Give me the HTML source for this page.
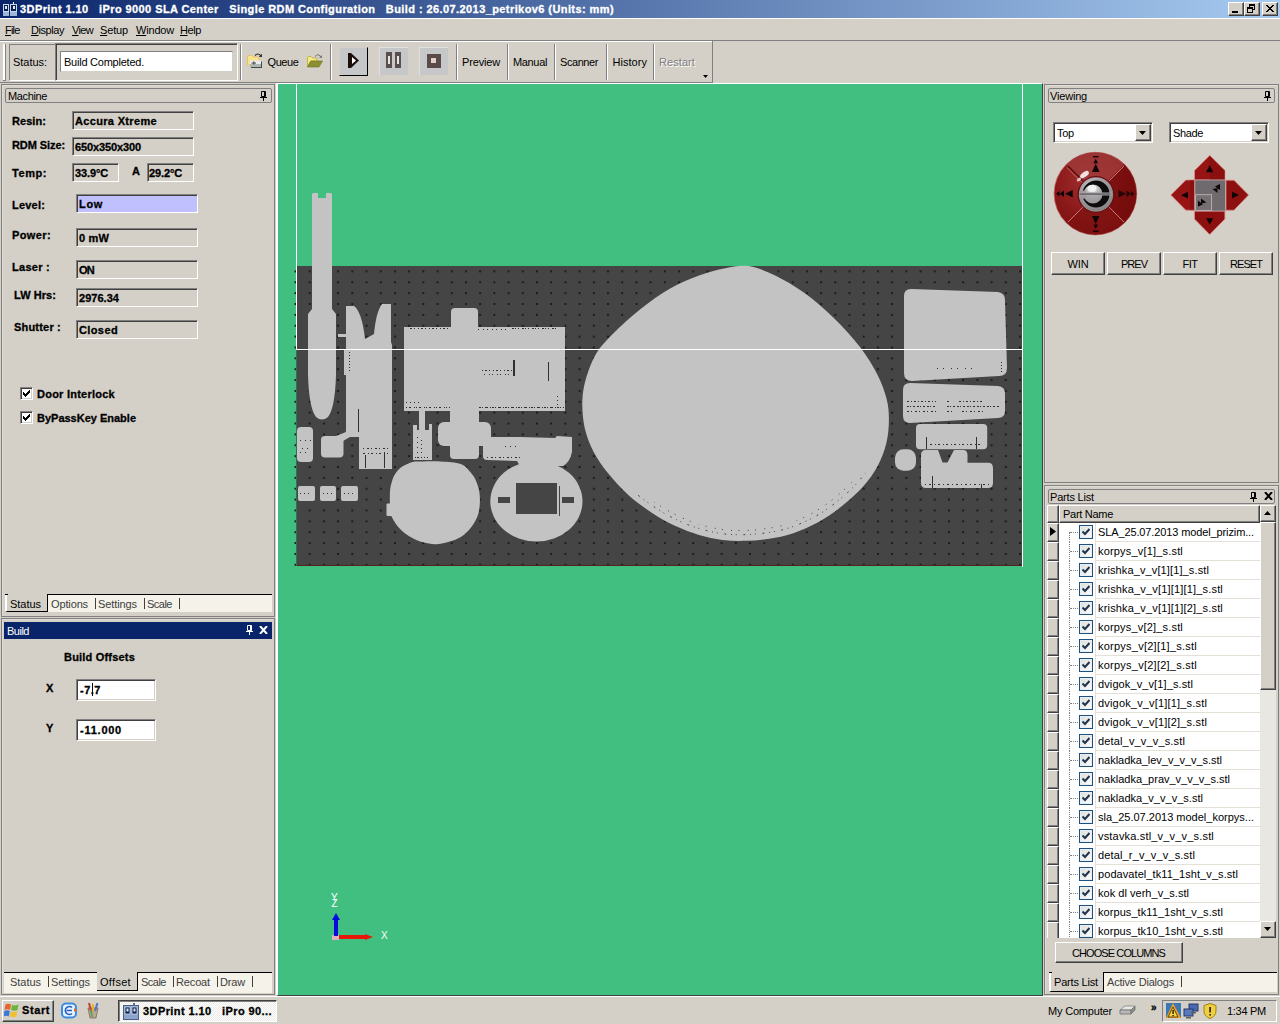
<!DOCTYPE html>
<html><head><meta charset="utf-8"><title>3DPrint 1.10</title>
<style>
html,body{margin:0;padding:0;}
body{width:1280px;height:1024px;overflow:hidden;background:#d4d0c8;position:relative;font-family:"Liberation Sans",sans-serif;font-size:11px;color:#000;}
div,span{box-sizing:border-box;}
.a{position:absolute;}
.t{position:absolute;white-space:nowrap;line-height:13px;height:13px;}
.b{font-weight:bold;-webkit-text-stroke:0.3px currentColor;}
.w{color:#fff;}
u{text-decoration:underline;}
/* title */
#title{left:0;top:0;width:1280px;height:18px;border-bottom:0;background:linear-gradient(to right,#0a246a 0%,#a6caf0 100%);}
.cap{position:absolute;top:2px;width:16px;height:14px;background:#d4d0c8;border:1px solid;border-color:#fff #404040 #404040 #fff;box-shadow:inset -1px -1px 0 #808080;}
/* sunken / raised */
.sunk{border:1px solid;border-color:#808080 #fff #fff #808080;}
.sunk2{border:1px solid;border-color:#808080 #fff #fff #808080;box-shadow:inset 1px 1px 0 #404040, inset -1px -1px 0 #d4d0c8;}
.rais{border:1px solid;border-color:#fff #404040 #404040 #fff;box-shadow:inset -1px -1px 0 #808080;}
.fld{position:absolute;height:19px;background:#d4d0c8;border:1px solid;border-color:#808080 #fff #fff #808080;box-shadow:inset 1px 1px 0 #404040;}
.sepv{position:absolute;width:2px;border-left:1px solid #808080;border-right:1px solid #fff;}
.seph{position:absolute;height:2px;border-top:1px solid #808080;border-bottom:1px solid #fff;}
.grip{position:absolute;height:17px;border:1px solid #808080;border-radius:2px;background:#d4d0c8;}
.tabbar{position:absolute;height:20px;background:#f5f2ea;border-top:1px solid #000;}
.btn{position:absolute;background:#d4d0c8;border:1px solid;border-color:#fff #404040 #404040 #fff;box-shadow:inset -1px -1px 0 #808080;text-align:center;}
.ck{width:13px;height:13px;background:#fff;border:1px solid;border-color:#808080 #fff #fff #808080;box-shadow:inset 1px 1px 0 #404040, inset -1px -1px 0 #d4d0c8;}
.inp{background:#fff;border:1px solid;border-color:#808080 #fff #fff #808080;box-shadow:inset 1px 1px 0 #404040, inset -1px -1px 0 #d4d0c8;}
.hd{background:#d4d0c8;border:1px solid;border-color:#fff #404040 #404040 #fff;box-shadow:inset -1px -1px 0 #808080;}
.cb{width:14px;height:14px;border:1px solid #1c5180;background:linear-gradient(135deg,#dcdcd7 0%,#fff 100%);box-shadow:inset 0 0 0 1px #e8eef4;}

</style></head>
<body>
<!-- title bar -->
<div id="title" class="a"></div><div class="a" style="left:0;top:18px;width:1280px;height:1px;background:#fff;"></div>
<svg class="a" style="left:2px;top:1px;" width="16" height="16" viewBox="0 0 16 16">
  <rect x="1" y="3" width="6" height="12" fill="#9fb6d8"/><rect x="8" y="3" width="7" height="12" fill="#9fb6d8"/>
  <rect x="1.5" y="3.5" width="5" height="7" fill="#10204a" stroke="#c8d8f0"/><rect x="8.5" y="3.5" width="6" height="7" fill="#10204a" stroke="#c8d8f0"/>
  <rect x="3" y="5" width="2" height="3" fill="#dfe8f8"/><rect x="11" y="5" width="2" height="3" fill="#dfe8f8"/>
  <rect x="11" y="1" width="1" height="2" fill="#fff"/>
</svg>
<span class="t b w" style="letter-spacing:0.416px;left:20px;top:3px;">3DPrint 1.10&nbsp;&nbsp; iPro 9000 SLA Center&nbsp;&nbsp; Single RDM Configuration&nbsp;&nbsp; Build : 26.07.2013_petrikov6 (Units: mm)</span>
<div class="cap" style="left:1228px;"><div class="a" style="left:3px;top:8px;width:6px;height:2px;background:#000;"></div></div>
<div class="cap" style="left:1244px;"><div class="a" style="left:4px;top:1px;width:6px;height:6px;border:1px solid #000;border-top-width:2px;"></div><div class="a" style="left:2px;top:4px;width:6px;height:6px;border:1px solid #000;border-top-width:2px;background:#d4d0c8;"></div></div>
<div class="cap" style="left:1262px;"><svg class="a" style="left:3px;top:2px;" width="8" height="7" viewBox="0 0 8 7"><path d="M0 0L7 7M1 0L8 7M7 0L0 7M8 0L1 7" stroke="#000" stroke-width="1" shape-rendering="crispEdges" fill="none"/></svg></div>
<!-- menu -->
<span class="t" style="letter-spacing:-0.812px;left:5px;top:24px;"><u>F</u>ile</span>
<span class="t" style="letter-spacing:-0.440px;left:31px;top:24px;"><u>D</u>isplay</span>
<span class="t" style="letter-spacing:-0.664px;left:72px;top:24px;"><u>V</u>iew</span>
<span class="t" style="letter-spacing:-0.153px;left:100px;top:24px;"><u>S</u>etup</span>
<span class="t" style="letter-spacing:-0.190px;left:136px;top:24px;"><u>W</u>indow</span>
<span class="t" style="letter-spacing:-0.410px;left:180px;top:24px;"><u>H</u>elp</span>
<div class="a" style="left:0;top:40px;width:1280px;height:1px;background:#808080;"></div>
<!-- toolbar -->
<div class="a" style="left:3px;top:44px;width:3px;height:37px;background:#fff;border-right:1px solid #808080;border-bottom:1px solid #808080;"></div>
<div class="a" style="left:9px;top:44px;width:47px;height:37px;border:1px solid;border-color:#808080 #fff #fff #808080;"></div>
<span class="t" style="letter-spacing:-0.036px;left:13px;top:56px;">Status:</span>
<div class="a" style="left:55px;top:43px;width:183px;height:38px;border:1px solid;border-color:#808080 #fff #fff #808080;box-shadow:inset 1px 1px 0 #404040;"></div>
<div class="a" style="left:60px;top:51px;width:173px;height:21px;background:#fff;border:1px solid;border-color:#808080 #d4d0c8 #d4d0c8 #808080;"></div>
<span class="t" style="letter-spacing:-0.236px;left:64px;top:56px;">Build Completed.</span>
<div class="sepv" style="left:240px;top:44px;height:36px;"></div>
<svg class="a" style="left:246px;top:52px;" width="18" height="18" viewBox="0 0 18 18">
<path d="M1.500 5 Q1.500 3.500 3 3.500 H6 L7.500 5 H12 Q13 5 13 6 V13 H1.500 Z" fill="#f8e488" stroke="#e8b860" stroke-width="0.800"/>
<path d="M9 3.500 Q12 0.500 14.500 3.500" stroke="#202020" stroke-width="1.100" fill="none"/><path d="M12.800 4.800 L16 5 L15.800 1.800 Z" fill="#202020"/>
<rect x="5" y="9.500" width="11" height="6.500" fill="#404848"/><rect x="4" y="8.500" width="11" height="6.500" fill="#e8ecec"/><rect x="4" y="12" width="11" height="3" fill="#b0b8b4"/>
<rect x="7" y="9.500" width="1.500" height="3" fill="#606060"/><rect x="5.500" y="10.500" width="4.500" height="1.200" fill="#606060"/>
</svg>
<svg class="a" style="left:306px;top:53px;" width="18" height="16" viewBox="0 0 18 16">
<path d="M1.500 4.500 Q1.500 3.500 2.500 3.500 H5 L6.500 5 H11 V8 H4.500 L1.500 13.500 Z" fill="#f4ec80" stroke="#b8a838" stroke-width="0.800"/>
<path d="M1.500 14 L5 8 H16.500 L13 14 Z" fill="#8c9030" stroke="#707020" stroke-width="0.600"/>
<path d="M9 3.500 Q12 0 14.500 3.500" stroke="#707070" stroke-width="1" fill="none"/><path d="M13 4.500 L16 5 L15.800 2 Z" fill="#707070"/>
</svg>
<span class="t" style="letter-spacing:-0.406px;left:267.5px;top:56px;">Queue</span>
<div class="sepv" style="left:330px;top:44px;height:36px;"></div>
<div class="a" style="left:339px;top:47px;width:29px;height:29px;background:#c6c7c9;border:1px solid;border-color:#d4d0c8 #000 #000 #d4d0c8;"></div>
<svg class="a" style="left:347px;top:52px;" width="14" height="18" viewBox="0 0 14 18"><path d="M1 1 L4 1 L12 8.5 L4 16 L1 16 Z" fill="#1c0d0a"/><path d="M5 5 L9 8.5 L5 12 Z" fill="#fff"/></svg>
<div class="a" style="left:379px;top:47px;width:29px;height:28px;background:#c6c7c9;border-top:1px solid #e0e0e0;border-left:1px solid #e0e0e0;"></div>
<div class="a" style="left:386px;top:52px;width:6px;height:16px;background:#5a4f4d;"></div><div class="a" style="left:388px;top:56px;width:2px;height:8px;background:#e8e4e0;"></div>
<div class="a" style="left:395px;top:52px;width:6px;height:16px;background:#5a4f4d;"></div><div class="a" style="left:397px;top:56px;width:2px;height:8px;background:#e8e4e0;"></div>
<div class="a" style="left:419px;top:47px;width:29px;height:28px;background:#c6c7c9;border-top:1px solid #e0e0e0;border-left:1px solid #e0e0e0;"></div>
<div class="a" style="left:427px;top:54px;width:14px;height:14px;background:#5a4a48;"></div><div class="a" style="left:431px;top:58px;width:5px;height:5px;background:#e0d0c8;"></div>
<div class="sepv" style="left:456px;top:44px;height:36px;"></div>
<span class="t" style="letter-spacing:-0.161px;left:462px;top:56px;">Preview</span>
<div class="sepv" style="left:507px;top:44px;height:36px;"></div>
<span class="t" style="letter-spacing:-0.346px;left:513px;top:56px;">Manual</span>
<div class="sepv" style="left:554px;top:44px;height:36px;"></div>
<span class="t" style="letter-spacing:-0.426px;left:560px;top:56px;">Scanner</span>
<div class="sepv" style="left:606px;top:44px;height:36px;"></div>
<span class="t" style="letter-spacing:0.038px;left:612.5px;top:56px;">History</span>
<div class="sepv" style="left:653px;top:44px;height:36px;"></div>
<span class="t" style="letter-spacing:0.076px;left:659px;top:56px;color:#808080;text-shadow:1px 1px 0 #fff;">Restart</span>
<div class="a" style="left:712px;top:41px;width:1px;height:42px;background:#808080;"></div>
<div class="a" style="left:0;top:41px;width:712px;height:1px;background:#fff;"></div>
<svg class="a" style="left:703px;top:75px;" width="5" height="3" viewBox="0 0 5 3"><path d="M0 0H5L2.5 3Z" fill="#000"/></svg>
<div class="a" style="left:0;top:82px;width:713px;height:1px;background:#808080;"></div>
<!-- left dock frame -->
<div class="a" style="left:1px;top:84px;width:274px;height:533px;border:1px solid;border-color:#808080 #808080 #808080 #808080;box-shadow:inset 1px 1px 0 #e0ddd6;"></div>
<div class="grip" style="left:5px;top:88px;width:267px;height:15px;"></div>
<span class="t" style="letter-spacing:-0.368px;left:8px;top:90px;">Machine</span>
<svg class="a" style="left:260px;top:91px;" width="7" height="10" viewBox="0 0 7 10"><path d="M1.5 0.5H5.5V5.5H1.5ZM4.5 0.5V5.5M0 6.5H7M3.5 7V10" stroke="#000" fill="none" stroke-width="1"/></svg>
<!-- fields -->
<span class="t b" style="letter-spacing:0.062px;left:12px;top:115px;">Resin:</span>
<div class="fld" style="left:72px;top:111px;width:122px;"></div><span class="t b" style="letter-spacing:0.334px;left:75px;top:115px;">Accura Xtreme</span>
<span class="t b" style="letter-spacing:-0.087px;left:12px;top:139px;">RDM Size:</span>
<div class="fld" style="left:72px;top:137px;width:122px;"></div><span class="t b" style="letter-spacing:-0.118px;left:75px;top:141px;">650x350x300</span>
<span class="t b" style="letter-spacing:0.562px;left:12px;top:167px;">Temp:</span>
<div class="fld" style="left:72px;top:163px;width:47px;"></div><span class="t b" style="letter-spacing:-0.128px;left:75px;top:167px;">33.9°C</span>
<span class="t b" style="left:132px;top:165px;">A</span>
<div class="fld" style="left:147px;top:163px;width:47px;"></div><span class="t b" style="letter-spacing:-0.128px;left:149px;top:167px;">29.2°C</span>
<span class="t b" style="letter-spacing:0.201px;left:12px;top:199px;">Level:</span>
<div class="fld" style="left:76px;top:194px;width:122px;background:#c0c0ff;"></div><span class="t b" style="letter-spacing:0.667px;left:79px;top:198px;">Low</span>
<span class="t b" style="letter-spacing:0.385px;left:12px;top:229px;">Power:</span>
<div class="fld" style="left:76px;top:228px;width:122px;"></div><span class="t b" style="letter-spacing:0.164px;left:79px;top:232px;">0 mW</span>
<span class="t b" style="letter-spacing:0.275px;left:12px;top:261px;">Laser :</span>
<div class="fld" style="left:76px;top:260px;width:122px;"></div><span class="t b" style="letter-spacing:-0.750px;left:79px;top:264px;">ON</span>
<span class="t b" style="letter-spacing:0.062px;left:14px;top:289px;">LW Hrs:</span>
<div class="fld" style="left:76px;top:288px;width:122px;"></div><span class="t b" style="letter-spacing:0.033px;left:79px;top:292px;">2976.34</span>
<span class="t b" style="letter-spacing:0.196px;left:14px;top:321px;">Shutter :</span>
<div class="fld" style="left:76px;top:320px;width:122px;"></div><span class="t b" style="letter-spacing:0.385px;left:79px;top:324px;">Closed</span>
<!-- checkboxes -->
<div class="a ck" style="left:20px;top:387px;"></div><svg class="a" style="left:23px;top:390px;" width="7" height="7" viewBox="0 0 7 7"><path d="M0 2V5L2 7L7 2V-1L2 4Z" fill="#000" shape-rendering="crispEdges"/></svg>
<span class="t b" style="letter-spacing:0.244px;left:37px;top:388px;">Door Interlock</span>
<div class="a ck" style="left:20px;top:411px;"></div><svg class="a" style="left:23px;top:414px;" width="7" height="7" viewBox="0 0 7 7"><path d="M0 2V5L2 7L7 2V-1L2 4Z" fill="#000" shape-rendering="crispEdges"/></svg>
<span class="t b" style="letter-spacing:-0.004px;left:37px;top:412px;">ByPassKey Enable</span>
<!-- machine tabs -->
<div class="tabbar" style="left:47px;top:594px;width:225px;height:18px;"></div>
<div class="a" style="left:5px;top:595px;width:43px;height:17px;border:1px solid #000;border-top:none;border-left:2px solid #fff;background:#d4d0c8;"></div><div class="a" style="left:5px;top:594px;width:3px;height:1px;background:#000;"></div>
<span class="t" style="letter-spacing:-0.031px;left:10px;top:598px;">Status</span>
<span class="t" style="letter-spacing:-0.132px;left:51px;top:598px;color:#404040;">Options</span><div class="a" style="left:95px;top:598px;width:1px;height:11px;background:#404040;"></div>
<span class="t" style="letter-spacing:-0.094px;left:98px;top:598px;color:#404040;">Settings</span><div class="a" style="left:144px;top:598px;width:1px;height:11px;background:#404040;"></div>
<span class="t" style="letter-spacing:-0.506px;left:147px;top:598px;color:#404040;">Scale</span><div class="a" style="left:179px;top:598px;width:1px;height:11px;background:#404040;"></div>
<!-- build panel -->
<div class="a" style="left:1px;top:618px;width:274px;height:377px;border:1px solid #808080;box-shadow:inset 1px 1px 0 #e0ddd6;"></div>
<div class="a" style="left:4px;top:622px;width:268px;height:17px;background:#0a246a;"></div>
<span class="t w" style="letter-spacing:-0.494px;left:7px;top:625px;">Build</span>
<svg class="a" style="left:246px;top:625px;" width="7" height="10" viewBox="0 0 7 10"><path d="M1.5 0.5H5.5V5.5H1.5ZM4.5 0.5V5.5M0 6.5H7M3.5 7V10" stroke="#fff" fill="none" stroke-width="1"/></svg>
<svg class="a" style="left:259px;top:626px;" width="9" height="8" viewBox="0 0 9 8"><path d="M1 0L8 8M8 0L1 8" stroke="#fff" stroke-width="2" fill="none"/></svg>
<span class="t b" style="letter-spacing:0.196px;left:64px;top:651px;">Build Offsets</span>
<span class="t b" style="left:46px;top:682px;">X</span>
<div class="a inp" style="left:76px;top:679px;width:80px;height:22px;"></div><span class="t b" style="letter-spacing:0.508px;left:80px;top:684px;">-7.7</span><div class="a" style="left:92px;top:683px;width:1px;height:13px;background:#000;"></div>
<span class="t b" style="left:46px;top:722px;">Y</span>
<div class="a inp" style="left:76px;top:719px;width:80px;height:22px;"></div><span class="t b" style="letter-spacing:0.757px;left:80px;top:724px;">-11.000</span>
<!-- build tabs -->
<div class="tabbar" style="left:4px;top:972px;width:268px;height:21px;"></div>
<div class="a" style="left:97px;top:972px;width:41px;height:19px;border:1px solid #000;border-top:none;border-left:none;background:#d4d0c8;"></div>
<span class="t" style="letter-spacing:-0.031px;left:10px;top:976px;color:#404040;">Status</span><div class="a" style="left:48px;top:976px;width:1px;height:11px;background:#404040;"></div>
<span class="t" style="letter-spacing:-0.094px;left:51px;top:976px;color:#404040;">Settings</span>
<span class="t" style="letter-spacing:0.307px;left:100px;top:976px;">Offset</span>
<span class="t" style="letter-spacing:-0.506px;left:141px;top:976px;color:#404040;">Scale</span><div class="a" style="left:173px;top:976px;width:1px;height:11px;background:#404040;"></div>
<span class="t" style="letter-spacing:-0.143px;left:176px;top:976px;color:#404040;">Recoat</span><div class="a" style="left:217px;top:976px;width:1px;height:11px;background:#404040;"></div>
<span class="t" style="letter-spacing:-0.168px;left:220px;top:976px;color:#404040;">Draw</span><div class="a" style="left:252px;top:976px;width:1px;height:11px;background:#404040;"></div>
<!-- viewport -->
<div class="a" style="left:276px;top:83px;width:767px;height:913px;background:#40bf80;border-left:2px solid #fff;border-top:1px solid #fff;border-right:1px solid #404040;border-bottom:1px solid #404040;"></div>
<svg class="a" style="left:0;top:0;" width="1280" height="1024" viewBox="0 0 1280 1024">
<defs>
<pattern id="dots" x="294.5" y="270.4" width="14.206" height="10.867" patternUnits="userSpaceOnUse"><rect x="0" y="0" width="2" height="2" fill="#1c1c1c"/></pattern>
<clipPath id="eggclip"><path d="M600 495 L640 495 L700 525 L790 525 L840 490 L870 470 L900 470 L900 560 L600 560 Z"/></clipPath>
<clipPath id="vp"><rect x="278" y="84" width="764" height="911"/></clipPath>
</defs>
<g clip-path="url(#vp)">
<rect x="297" y="266" width="725" height="300" fill="#454545"/>
<rect x="294" y="266" width="729" height="301" fill="url(#dots)"/>
<rect x="297" y="565" width="725" height="1" fill="#5a2020"/>
<g fill="#c3c3c3" id="partsg">
<!-- P1 rod -->
<path d="M312 194 L313 193 L318 193 L318 198 L326 198 L326 193 L331 193 L332 194 L332 309 L336 314 L336 375 Q335 408 328 417 Q322 422 316 417 Q309 408 308 375 L308 314 L312 309 Z"/>
<!-- P2 fork -->
<path d="M346 306 L354 306 Q362 312 365 339 L374 334 Q376 312 382 304 L391 304 L391 342 L392 345 L392 469 L359 469 L359 437 L350 437 Q345 437 343 439 L343 436 Q346 434 346 430 L346 375 L344 375 L344 349 L346 349 L346 337 L338 337 L338 334 L346 334 Z"/>
<rect x="321" y="436" width="22.500" height="21.500" rx="4"/>
<path d="M336 436 L346 432 L350 437 L343 441 Z"/>
<!-- P4 small left -->
<rect x="297" y="427" width="16" height="35" rx="4"/>
<!-- squares -->
<rect x="298" y="486" width="17" height="15" rx="2"/><rect x="320" y="486" width="16" height="15" rx="2"/><rect x="341" y="486" width="17" height="15" rx="2"/>
<!-- P5 big rect + bump -->
<rect x="404" y="327" width="161" height="84"/>
<rect x="451" y="308" width="27" height="24" rx="4"/>
<!-- P6 cross -->
<rect x="450" y="408" width="29" height="51" rx="4"/>
<rect x="438" y="422" width="53" height="24" rx="6"/>
<!-- P7 small -->
<path d="M419 410 H425 V430 H429 V424 H432 V460 H413 V425 H417 V430 H419 Z"/>
<!-- P8 long -->
<path d="M483 441 Q483 437 487 437 L520 437 L555 438 L557 436 L572 437 L572 452 Q570 462 563 466 L520 466 L517 461 L487 460 Q483 460 483 456 Z"/>
<!-- P9 circle -->
<path d="M421.2 461.5 C426.0 461.4 434.4 461.1 441.0 461.5 C447.6 461.9 456.1 462.4 460.8 464.0 C465.5 465.6 467.0 468.4 469.4 471.0 C471.8 473.6 473.8 476.1 475.4 479.5 C477.0 482.9 478.6 487.3 479.3 491.6 C480.0 495.9 480.1 501.0 479.7 505.3 C479.3 509.6 478.8 513.3 477.1 517.3 C475.4 521.3 472.7 525.8 469.4 529.4 C466.1 533.0 462.5 536.4 457.3 538.8 C452.1 541.2 444.1 543.4 438.4 544.0 C432.7 544.6 427.9 543.6 423.0 542.3 C418.1 541.0 413.2 538.7 409.2 536.2 C405.2 533.8 401.6 530.6 398.9 527.7 C396.2 524.8 394.3 521.8 392.9 519.0 C391.5 516.2 390.8 515.6 390.3 511.0 C389.8 506.4 389.7 496.6 390.0 491.6 C390.3 486.6 391.1 484.3 392.0 481.2 C392.9 478.2 393.8 475.9 395.5 473.5 C397.2 471.1 399.4 468.5 402.3 466.6 C405.2 464.7 409.5 462.9 412.7 462.0 C415.9 461.1 416.5 461.6 421.2 461.5 Z"/>
<rect x="386.5" y="503.5" width="8" height="12.500" rx="1"/>
<!-- P10 ring -->
<ellipse cx="536.4" cy="501.300" rx="46.100" ry="40.200"/>
<rect x="559" y="486" width="1" height="30" fill="#454545"/>
<!-- egg -->
<path d="M748.8 266.1 C757.1 267.3 765.9 271.0 775.2 275.5 C784.5 280.0 794.7 286.0 804.5 293.1 C814.3 300.2 824.5 309.0 833.8 318.0 C843.1 327.0 852.9 337.8 860.2 347.3 C867.5 356.8 873.3 366.6 877.7 375.2 C882.1 383.8 884.6 391.3 886.5 398.6 C888.4 405.9 888.9 411.8 888.9 419.1 C888.9 426.4 888.4 434.8 886.5 442.6 C884.6 450.4 881.6 458.7 877.7 466.0 C873.8 473.3 869.0 479.9 863.1 486.5 C857.2 493.1 849.9 499.7 842.6 505.6 C835.3 511.5 827.4 517.1 819.1 521.7 C810.8 526.3 801.0 530.6 792.7 533.4 C784.4 536.2 777.1 537.5 769.3 538.7 C761.5 539.9 753.6 540.6 745.8 540.8 C738.0 541.0 730.2 540.9 722.4 539.9 C714.6 538.9 706.8 537.2 699.0 534.9 C691.2 532.6 683.3 529.8 675.5 526.1 C667.7 522.4 659.9 518.0 652.1 512.9 C644.3 507.8 635.9 501.9 628.6 495.3 C621.3 488.7 614.0 480.6 608.1 473.3 C602.2 466.0 597.3 459.0 593.4 451.4 C589.5 443.8 586.6 436.2 584.7 427.9 C582.9 419.6 582.1 409.8 582.3 401.5 C582.5 393.2 583.8 386.2 586.1 378.1 C588.5 370.1 591.8 360.8 596.4 353.2 C601.0 345.6 606.7 340.0 614.0 332.7 C621.3 325.4 631.0 316.5 640.3 309.2 C649.6 301.9 659.9 294.3 669.7 288.7 C679.5 283.1 689.7 278.9 699.0 275.5 C708.3 272.1 717.0 269.8 725.3 268.2 C733.6 266.6 740.5 264.9 748.8 266.1 Z"/>
<!-- P12 -->
<path d="M904 296 Q904 289 911 289 L998 292 Q1005 293 1005 300 L1007 368 Q1007 376 999 376 L912 381 Q904 381 904 373 Z"/>
<!-- P13 -->
<path d="M903 390 Q903 383 910 383 L998 386 Q1005 387 1005 393 L1005 411 Q1005 418 998 418 L910 423 Q903 423 903 416 Z"/>
<!-- P14 -->
<rect x="916" y="424" width="71.200" height="25.200" rx="4"/>
<!-- P15 -->
<rect x="895" y="449.200" width="21" height="21.600" rx="8.500"/>
<!-- P16 -->
<path d="M921 455 Q921 450 926 450 L938 450 L942.500 462.500 L947.500 462.500 L954 450 L963 450 Q967.500 450 967.500 455 L967.500 462.800 L988 462.800 Q993 462.800 993 468 L993 483 Q993 488 988 488 L926 488 Q921 488 921 483 Z"/>
</g>
<!-- speckle details -->
<g stroke="#303030" stroke-width="1" fill="none" shape-rendering="crispEdges">
<path d="M410 328.500 H448" stroke-dasharray="2 2 1 3 1 2"/><path d="M478 329.500 H508" stroke-dasharray="1 4 1 3"/><path d="M512 328.500 H557" stroke-dasharray="2 1 1 2 1 3"/>
<path d="M406 407.500 H450" stroke-dasharray="1 2 2 3 1 1"/><path d="M479 407.500 H564" stroke-dasharray="2 1 1 2 3 2 1 1"/>
<path d="M406 402.500 H420" stroke-dasharray="1 3"/><path d="M557 396 V408" stroke-dasharray="1 3"/>
<path d="M482 370.500 H512" stroke-dasharray="1 2 2 2 1 3"/><path d="M484 374.500 H510" stroke-dasharray="1 4 1 2"/>
<rect x="513" y="360" width="2" height="16" fill="#303030" stroke="none"/><path d="M548.500 362 V381"/>
<path d="M907 401.500 H936 M947 401.500 H951 M959 401.500 H982" stroke-dasharray="2 2 1 2"/>
<path d="M907 406.500 H936 M947 406.500 H1000" stroke-dasharray="2 1 1 2 2 2"/>
<path d="M907 411.500 H936 M947 411.500 H952 M962 411.500 H985" stroke-dasharray="2 2 1 3"/>
<path d="M930 444.500 H982" stroke-dasharray="2 3 1 2"/><path d="M926.500 437 V449 M976.500 437 V449"/>
<path d="M925 484.500 H990" stroke-dasharray="1 3 2 3"/><path d="M932.500 476 V488 M981.500 484 V488"/>
<path d="M937 368.500 H975" stroke-dasharray="1 5 1 7"/><path d="M1001.500 362 V374" stroke-dasharray="1 2"/>
<path d="M349.500 352 V372" stroke-dasharray="1 2"/><path d="M363 448.500 H390" stroke-dasharray="1 3 2 2"/><path d="M363 453.500 H388" stroke-dasharray="2 3 1 2"/>
<path d="M365.500 455 V468 M384.500 452 V468"/><path d="M358.500 409 V432"/>
<path d="M417 437 V458" stroke-dasharray="1 4"/><path d="M421.500 440 V456" stroke-dasharray="1 3"/><path d="M415 457.500 H430" stroke-dasharray="1 2"/>
<path d="M487 457.500 H520" stroke-dasharray="1 3 2 2"/><path d="M505 446.500 H520" stroke-dasharray="1 4"/>
<path d="M300 440 H312 M302 448 H311 M300 452 H310" stroke-dasharray="1 4"/>
<path d="M300 493.500 H312 M323 493.500 H334 M344 493.500 H356" stroke-dasharray="1 3"/>
</g>
<g clip-path="url(#eggclip)"><path id="eggsp" d="M748.8 266.1 C757.1 267.3 765.9 271.0 775.2 275.5 C784.5 280.0 794.7 286.0 804.5 293.1 C814.3 300.2 824.5 309.0 833.8 318.0 C843.1 327.0 852.9 337.8 860.2 347.3 C867.5 356.8 873.3 366.6 877.7 375.2 C882.1 383.8 884.6 391.3 886.5 398.6 C888.4 405.9 888.9 411.8 888.9 419.1 C888.9 426.4 888.4 434.8 886.5 442.6 C884.6 450.4 881.6 458.7 877.7 466.0 C873.8 473.3 869.0 479.9 863.1 486.5 C857.2 493.1 849.9 499.7 842.6 505.6 C835.3 511.5 827.4 517.1 819.1 521.7 C810.8 526.3 801.0 530.6 792.7 533.4 C784.4 536.2 777.1 537.5 769.3 538.7 C761.5 539.9 753.6 540.6 745.8 540.8 C738.0 541.0 730.2 540.9 722.4 539.9 C714.6 538.9 706.8 537.2 699.0 534.9 C691.2 532.6 683.3 529.8 675.5 526.1 C667.7 522.4 659.9 518.0 652.1 512.9 C644.3 507.8 635.9 501.9 628.6 495.3 C621.3 488.7 614.0 480.6 608.1 473.3 C602.2 466.0 597.3 459.0 593.4 451.4 C589.5 443.8 586.6 436.2 584.7 427.9 C582.9 419.6 582.1 409.8 582.3 401.5 C582.5 393.2 583.8 386.2 586.1 378.1 C588.5 370.1 591.8 360.8 596.4 353.2 C601.0 345.6 606.7 340.0 614.0 332.7 C621.3 325.4 631.0 316.5 640.3 309.2 C649.6 301.9 659.9 294.3 669.7 288.7 C679.5 283.1 689.7 278.9 699.0 275.5 C708.3 272.1 717.0 269.8 725.3 268.2 C733.6 266.6 740.5 264.9 748.8 266.1 Z" transform="translate(735.6 403.400) scale(0.955) translate(-735.6 -403.400)" stroke="#404040" stroke-width="1" fill="none" stroke-dasharray="1 5 2 7 1 4"/>
<path d="M748.8 266.1 C757.1 267.3 765.9 271.0 775.2 275.5 C784.5 280.0 794.7 286.0 804.5 293.1 C814.3 300.2 824.5 309.0 833.8 318.0 C843.1 327.0 852.9 337.8 860.2 347.3 C867.5 356.8 873.3 366.6 877.7 375.2 C882.1 383.8 884.6 391.3 886.5 398.6 C888.4 405.9 888.9 411.8 888.9 419.1 C888.9 426.4 888.4 434.8 886.5 442.6 C884.6 450.4 881.6 458.7 877.7 466.0 C873.8 473.3 869.0 479.9 863.1 486.5 C857.2 493.1 849.9 499.7 842.6 505.6 C835.3 511.5 827.4 517.1 819.1 521.7 C810.8 526.3 801.0 530.6 792.7 533.4 C784.4 536.2 777.1 537.5 769.3 538.7 C761.5 539.9 753.6 540.6 745.8 540.8 C738.0 541.0 730.2 540.9 722.4 539.9 C714.6 538.9 706.8 537.2 699.0 534.9 C691.2 532.6 683.3 529.8 675.5 526.1 C667.7 522.4 659.9 518.0 652.1 512.9 C644.3 507.8 635.9 501.9 628.6 495.3 C621.3 488.7 614.0 480.6 608.1 473.3 C602.2 466.0 597.3 459.0 593.4 451.4 C589.5 443.8 586.6 436.2 584.7 427.9 C582.9 419.6 582.1 409.8 582.3 401.5 C582.5 393.2 583.8 386.2 586.1 378.1 C588.5 370.1 591.8 360.8 596.4 353.2 C601.0 345.6 606.7 340.0 614.0 332.7 C621.3 325.4 631.0 316.5 640.3 309.2 C649.6 301.9 659.9 294.3 669.7 288.7 C679.5 283.1 689.7 278.9 699.0 275.5 C708.3 272.1 717.0 269.8 725.3 268.2 C733.6 266.6 740.5 264.9 748.8 266.1 Z" transform="translate(735.6 403.400) scale(0.925) translate(-735.6 -403.400)" stroke="#303030" stroke-width="1" fill="none" stroke-dasharray="1 7 1 9"/></g>
<!-- ring holes -->
<rect x="516" y="483" width="41" height="31" fill="#454545"/>
<rect x="498" y="497" width="12" height="6" fill="#454545"/><rect x="562" y="497" width="12" height="6" fill="#454545"/>
<!-- box lines -->
<rect x="296" y="350" width="1" height="216" fill="#30705a"/>
<rect x="296" y="84" width="1" height="266" fill="#fff"/>
<rect x="296" y="349" width="727" height="1" fill="#fff"/>
<rect x="1022" y="84" width="1" height="483" fill="#fff"/>
<!-- axis -->
<rect x="332" y="935" width="7" height="5" fill="#e0b0c0"/>
<path d="M334 936 V920 H332 L336 913 L340 920 H338 V936 Z" fill="#0808e0"/>
<path d="M339 935 H365 V934 L373 937 L365 940 V939 H339 Z" fill="#e81808"/>
<g font-family="Liberation Sans, sans-serif" font-size="10" fill="#fff"><text x="331" y="901">Y</text><text x="331.500" y="906.500">Z</text><text x="381" y="939">X</text></g>
</g>
</svg>
<!-- right dock -->
<div class="a" style="left:1044px;top:84px;width:235px;height:399px;border:1px solid #808080;box-shadow:inset 1px 1px 0 #e0ddd6;"></div>
<div class="grip" style="left:1048px;top:88px;width:227px;height:15px;"></div>
<span class="t" style="letter-spacing:-0.190px;left:1050px;top:90px;">Viewing</span>
<svg class="a" style="left:1264px;top:91px;" width="7" height="10" viewBox="0 0 7 10"><path d="M1.5 0.500H5.5V5.5H1.5ZM4.5 0.500V5.5M0 6.5H7M3.5 7V10" stroke="#000" fill="none" stroke-width="1"/></svg>
<div class="a inp" style="left:1053px;top:122px;width:100px;height:21px;"></div>
<span class="t" style="letter-spacing:-0.250px;left:1057px;top:127px;">Top</span>
<div class="btn" style="left:1135px;top:124px;width:16px;height:17px;"></div>
<svg class="a" style="left:1139px;top:131px;" width="7" height="4" viewBox="0 0 7 4"><path d="M0 0H7L3.5 4Z" fill="#000"/></svg>
<div class="a inp" style="left:1169px;top:122px;width:100px;height:21px;"></div>
<span class="t" style="letter-spacing:-0.362px;left:1173px;top:127px;">Shade</span>
<div class="btn" style="left:1251px;top:124px;width:16px;height:17px;"></div>
<svg class="a" style="left:1255px;top:131px;" width="7" height="4" viewBox="0 0 7 4"><path d="M0 0H7L3.5 4Z" fill="#000"/></svg>
<svg class="a" style="left:1046px;top:146px;" width="214" height="96" viewBox="1046 146 214 96">
<defs>
<radialGradient id="wg" cx="0.42" cy="0.35" r="0.7"><stop offset="0" stop-color="#a03030"/><stop offset="0.6" stop-color="#8a1818"/><stop offset="1" stop-color="#7a0e0e"/></radialGradient>
<radialGradient id="cg" cx="0.4" cy="0.3" r="0.8"><stop offset="0" stop-color="#e8e8e8"/><stop offset="0.35" stop-color="#a8a4a8"/><stop offset="1" stop-color="#807c80"/></radialGradient>
<clipPath id="wc"><circle cx="1095.4" cy="193.600" r="41.3"/></clipPath>
</defs>
<circle cx="1095.4" cy="193.600" r="41.3" fill="url(#wg)" stroke="#c06060" stroke-width="0.8"/>
<g clip-path="url(#wc)">
<path d="M1095.4 193.600 L1066 164 A41.3 41.3 0 0 1 1125 164 Z" fill="#a03c3c" opacity="0.75"/>
<path d="M1095.4 193.600 L1125 164 A41.3 41.3 0 0 1 1125 223 Z" fill="#700808" opacity="0.6"/>
<path d="M1095.4 193.600 L1125 223 A41.3 41.3 0 0 1 1066 223 Z" fill="#7c1010" opacity="0.5"/>
<path d="M1068 166 L1083 181" stroke="#5a0808" stroke-width="1.2"/><path d="M1067 167.500 L1082 182.500" stroke="#d08080" stroke-width="0.8"/>
<path d="M1124 166 L1109 181" stroke="#c87878" stroke-width="1"/>
<path d="M1068 222 L1083 207" stroke="#c87878" stroke-width="1"/>
<path d="M1124 222 L1109 207" stroke="#c87878" stroke-width="1"/>
</g>
<ellipse cx="1084.500" cy="174.500" rx="5" ry="2.500" fill="#fff" opacity="0.85" transform="rotate(-35 1084.500 174.500)"/><ellipse cx="1079" cy="179.500" rx="2.500" ry="1.500" fill="#fff" opacity="0.7" transform="rotate(-35 1079 179.500)"/>
<circle cx="1096" cy="194.500" r="18.500" fill="#6a0c0c"/>
<circle cx="1096" cy="194.500" r="17.200" fill="url(#cg)"/>
<path fill-rule="evenodd" d="M1082.500 194 A13.500 13.500 0 1 0 1109.500 194 A13.500 13.500 0 1 0 1082.500 194 Z M1083.500 194 A9.500 9.500 0 1 0 1102.500 194 A9.500 9.500 0 1 0 1083.500 194 Z" fill="#0c0c0c"/>
<path d="M1080 190.500 H1086 V198.500 H1080 Z" fill="#9c989c"/>
<rect x="1079.500" y="192.500" width="32" height="3" fill="#a8a4a8"/><rect x="1079.500" y="193.600" width="31" height="0.900" fill="#3a3a3a"/>
<ellipse cx="1092" cy="188.500" rx="4.500" ry="3.500" fill="#f4f4f4" opacity="0.9"/>
<g fill="#100404">
<path d="M1095.700 163.500 L1099.500 172 H1092 Z"/><path d="M1095.700 158.800 L1098 163.300 H1093.400 Z"/><rect x="1093" y="156" width="5.500" height="1.400"/>
<path d="M1065 193.800 L1072.700 190 V197.600 Z"/><path d="M1059.500 193.800 L1064 190.500 V197 Z"/><path d="M1056 193.800 L1059.500 191 V196.600 Z"/>
<path d="M1126 193.800 L1118.500 190 V197.600 Z" opacity="0.8"/><path d="M1131 193.800 L1126.500 190.500 V197 Z" opacity="0.8"/><path d="M1134.500 193.800 L1131 191 V196.600 Z" opacity="0.8"/>
<path d="M1095.700 224 L1099.500 216 H1092 Z"/><path d="M1095.700 229 L1098 224.600 H1093.400 Z"/><rect x="1093" y="230.500" width="5.500" height="1.400"/>
</g>
<!-- cross -->
<g stroke="#e08888" stroke-width="0.8">
<path d="M1209.700 155.400 L1224.900 170.600 V180 H1194.500 V170.600 Z" fill="#961414"/>
<path d="M1170.800 195 L1185.800 180 H1194.500 V210.200 H1185.800 Z" fill="#961414"/>
<path d="M1248.600 195 L1234 180.200 H1226 V210.200 H1234 Z" fill="#8c1010"/>
<path d="M1209.700 234.600 L1224.900 219.100 V211 H1194.500 V219.100 Z" fill="#8c1010"/>
</g>
<path d="M1209.700 155.400 L1224.900 170.600 V180 H1209.700 Z" fill="#7d0c0c" opacity="0.5"/>
<path d="M1190 180 H1194.500 V210.200 H1190 Z" fill="#7d0c0c" opacity="0.5"/>
<rect x="1194.900" y="180" width="30.500" height="31" fill="#6e6a6e" stroke="#c0a4a4" stroke-width="0.8"/>
<rect x="1195.600" y="194.700" width="16" height="15.800" fill="#747074" stroke="#c8b0b0" stroke-width="0.9"/>
<g fill="#100404">
<path d="M1209.700 165 L1213.300 172.200 H1206 Z"/>
<path d="M1181 195.200 L1188 191.800 V198.600 Z"/>
<path d="M1239 195 L1232 191.500 V198.600 Z"/>
<path d="M1209.700 224.600 L1213.400 218.200 H1206 Z"/>
<path d="M1220 184 V190 L1215 186.500 Z M1217.500 188 V193 L1212.500 189 Z"/>
<path d="M1198 206.500 V200.500 L1203 204.500 Z M1201 203.500 V198.500 L1206.400 202.500 Z"/>
</g>
</svg>

<div class="btn" style="left:1051px;top:252px;width:54px;height:23px;"></div>
<span class="t" style="letter-spacing:-0.130px;left:1067.5px;top:258px;">WIN</span>
<div class="btn" style="left:1107px;top:252px;width:54px;height:23px;"></div>
<span class="t" style="letter-spacing:-0.992px;left:1121.0px;top:258px;">PREV</span>
<div class="btn" style="left:1163px;top:252px;width:54px;height:23px;"></div>
<span class="t" style="letter-spacing:-0.500px;left:1182.5px;top:258px;">FIT</span>
<div class="btn" style="left:1219px;top:252px;width:54px;height:23px;"></div>
<span class="t" style="letter-spacing:-0.938px;left:1230.0px;top:258px;">RESET</span>
<div class="a" style="left:1044px;top:485px;width:235px;height:510px;border:1px solid #808080;box-shadow:inset 1px 1px 0 #e0ddd6;"></div>
<div class="grip" style="left:1048px;top:489px;width:227px;height:15px;"></div>
<span class="t" style="letter-spacing:-0.186px;left:1050px;top:491px;">Parts List</span>
<svg class="a" style="left:1250px;top:492px;" width="7" height="10" viewBox="0 0 7 10"><path d="M1.5 0.500H5.5V5.5H1.5ZM4.5 0.500V5.5M0 6.5H7M3.5 7V10" stroke="#000" fill="none" stroke-width="1"/></svg>
<svg class="a" style="left:1264px;top:492px;" width="9" height="8" viewBox="0 0 9 8"><path d="M1 0L8 8M8 0L1 8" stroke="#000" stroke-width="2" fill="none"/></svg>
<div class="a" style="left:1047px;top:505px;width:229px;height:433px;background:#fff;overflow:hidden;" id="plist">
<div class="a hd" style="left:0;top:0;width:12px;height:18px;"></div>
<div class="a hd" style="left:12px;top:0;width:201px;height:18px;"></div>
<span class="t" style="letter-spacing:-0.286px;left:16px;top:3px;">Part Name</span>
<div class="a hd" style="left:0;top:18px;width:12px;height:19px;"></div>
<div class="a" style="left:48px;top:18px;width:165px;height:19px;border-bottom:1px solid #e4e0d8;border-left:1px solid #e4e0d8;"></div>
<div class="a" style="left:22px;top:27px;width:1px;height:10px;border-left:1px dotted #808080;"></div>
<div class="a" style="left:23px;top:27px;width:8px;height:1px;border-top:1px dotted #808080;"></div>
<div class="a cb" style="left:32px;top:20px;"></div><svg class="a" style="left:35px;top:23px;" width="8" height="8" viewBox="0 0 8 8"><path d="M0.500 3.5L3 6L7.500 1" stroke="#21344d" stroke-width="2" fill="none"/></svg>
<span class="t" style="letter-spacing:-0.120px;left:51px;top:21px;">SLA_25.07.2013 model_prizim...</span>
<div class="a hd" style="left:0;top:37px;width:12px;height:19px;"></div>
<div class="a" style="left:48px;top:37px;width:165px;height:19px;border-bottom:1px solid #e4e0d8;border-left:1px solid #e4e0d8;"></div>
<div class="a" style="left:22px;top:37px;width:1px;height:19px;border-left:1px dotted #808080;"></div>
<div class="a" style="left:23px;top:46px;width:8px;height:1px;border-top:1px dotted #808080;"></div>
<div class="a cb" style="left:32px;top:39px;"></div><svg class="a" style="left:35px;top:42px;" width="8" height="8" viewBox="0 0 8 8"><path d="M0.500 3.5L3 6L7.500 1" stroke="#21344d" stroke-width="2" fill="none"/></svg>
<span class="t" style="letter-spacing:0.181px;left:51px;top:40px;">korpys_v[1]_s.stl</span>
<div class="a hd" style="left:0;top:56px;width:12px;height:19px;"></div>
<div class="a" style="left:48px;top:56px;width:165px;height:19px;border-bottom:1px solid #e4e0d8;border-left:1px solid #e4e0d8;"></div>
<div class="a" style="left:22px;top:56px;width:1px;height:19px;border-left:1px dotted #808080;"></div>
<div class="a" style="left:23px;top:65px;width:8px;height:1px;border-top:1px dotted #808080;"></div>
<div class="a cb" style="left:32px;top:58px;"></div><svg class="a" style="left:35px;top:61px;" width="8" height="8" viewBox="0 0 8 8"><path d="M0.500 3.5L3 6L7.500 1" stroke="#21344d" stroke-width="2" fill="none"/></svg>
<span class="t" style="letter-spacing:0.121px;left:51px;top:59px;">krishka_v_v[1][1]_s.stl</span>
<div class="a hd" style="left:0;top:75px;width:12px;height:19px;"></div>
<div class="a" style="left:48px;top:75px;width:165px;height:19px;border-bottom:1px solid #e4e0d8;border-left:1px solid #e4e0d8;"></div>
<div class="a" style="left:22px;top:75px;width:1px;height:19px;border-left:1px dotted #808080;"></div>
<div class="a" style="left:23px;top:84px;width:8px;height:1px;border-top:1px dotted #808080;"></div>
<div class="a cb" style="left:32px;top:77px;"></div><svg class="a" style="left:35px;top:80px;" width="8" height="8" viewBox="0 0 8 8"><path d="M0.500 3.5L3 6L7.500 1" stroke="#21344d" stroke-width="2" fill="none"/></svg>
<span class="t" style="letter-spacing:0.175px;left:51px;top:78px;">krishka_v_v[1][1][1]_s.stl</span>
<div class="a hd" style="left:0;top:94px;width:12px;height:19px;"></div>
<div class="a" style="left:48px;top:94px;width:165px;height:19px;border-bottom:1px solid #e4e0d8;border-left:1px solid #e4e0d8;"></div>
<div class="a" style="left:22px;top:94px;width:1px;height:19px;border-left:1px dotted #808080;"></div>
<div class="a" style="left:23px;top:103px;width:8px;height:1px;border-top:1px dotted #808080;"></div>
<div class="a cb" style="left:32px;top:96px;"></div><svg class="a" style="left:35px;top:99px;" width="8" height="8" viewBox="0 0 8 8"><path d="M0.500 3.5L3 6L7.500 1" stroke="#21344d" stroke-width="2" fill="none"/></svg>
<span class="t" style="letter-spacing:0.175px;left:51px;top:97px;">krishka_v_v[1][1][2]_s.stl</span>
<div class="a hd" style="left:0;top:113px;width:12px;height:19px;"></div>
<div class="a" style="left:48px;top:113px;width:165px;height:19px;border-bottom:1px solid #e4e0d8;border-left:1px solid #e4e0d8;"></div>
<div class="a" style="left:22px;top:113px;width:1px;height:19px;border-left:1px dotted #808080;"></div>
<div class="a" style="left:23px;top:122px;width:8px;height:1px;border-top:1px dotted #808080;"></div>
<div class="a cb" style="left:32px;top:115px;"></div><svg class="a" style="left:35px;top:118px;" width="8" height="8" viewBox="0 0 8 8"><path d="M0.500 3.5L3 6L7.500 1" stroke="#21344d" stroke-width="2" fill="none"/></svg>
<span class="t" style="letter-spacing:0.181px;left:51px;top:116px;">korpys_v[2]_s.stl</span>
<div class="a hd" style="left:0;top:132px;width:12px;height:19px;"></div>
<div class="a" style="left:48px;top:132px;width:165px;height:19px;border-bottom:1px solid #e4e0d8;border-left:1px solid #e4e0d8;"></div>
<div class="a" style="left:22px;top:132px;width:1px;height:19px;border-left:1px dotted #808080;"></div>
<div class="a" style="left:23px;top:141px;width:8px;height:1px;border-top:1px dotted #808080;"></div>
<div class="a cb" style="left:32px;top:134px;"></div><svg class="a" style="left:35px;top:137px;" width="8" height="8" viewBox="0 0 8 8"><path d="M0.500 3.5L3 6L7.500 1" stroke="#21344d" stroke-width="2" fill="none"/></svg>
<span class="t" style="letter-spacing:0.242px;left:51px;top:135px;">korpys_v[2][1]_s.stl</span>
<div class="a hd" style="left:0;top:151px;width:12px;height:19px;"></div>
<div class="a" style="left:48px;top:151px;width:165px;height:19px;border-bottom:1px solid #e4e0d8;border-left:1px solid #e4e0d8;"></div>
<div class="a" style="left:22px;top:151px;width:1px;height:19px;border-left:1px dotted #808080;"></div>
<div class="a" style="left:23px;top:160px;width:8px;height:1px;border-top:1px dotted #808080;"></div>
<div class="a cb" style="left:32px;top:153px;"></div><svg class="a" style="left:35px;top:156px;" width="8" height="8" viewBox="0 0 8 8"><path d="M0.500 3.5L3 6L7.500 1" stroke="#21344d" stroke-width="2" fill="none"/></svg>
<span class="t" style="letter-spacing:0.242px;left:51px;top:154px;">korpys_v[2][2]_s.stl</span>
<div class="a hd" style="left:0;top:170px;width:12px;height:19px;"></div>
<div class="a" style="left:48px;top:170px;width:165px;height:19px;border-bottom:1px solid #e4e0d8;border-left:1px solid #e4e0d8;"></div>
<div class="a" style="left:22px;top:170px;width:1px;height:19px;border-left:1px dotted #808080;"></div>
<div class="a" style="left:23px;top:179px;width:8px;height:1px;border-top:1px dotted #808080;"></div>
<div class="a cb" style="left:32px;top:172px;"></div><svg class="a" style="left:35px;top:175px;" width="8" height="8" viewBox="0 0 8 8"><path d="M0.500 3.5L3 6L7.500 1" stroke="#21344d" stroke-width="2" fill="none"/></svg>
<span class="t" style="letter-spacing:0.109px;left:51px;top:173px;">dvigok_v_v[1]_s.stl</span>
<div class="a hd" style="left:0;top:189px;width:12px;height:19px;"></div>
<div class="a" style="left:48px;top:189px;width:165px;height:19px;border-bottom:1px solid #e4e0d8;border-left:1px solid #e4e0d8;"></div>
<div class="a" style="left:22px;top:189px;width:1px;height:19px;border-left:1px dotted #808080;"></div>
<div class="a" style="left:23px;top:198px;width:8px;height:1px;border-top:1px dotted #808080;"></div>
<div class="a cb" style="left:32px;top:191px;"></div><svg class="a" style="left:35px;top:194px;" width="8" height="8" viewBox="0 0 8 8"><path d="M0.500 3.5L3 6L7.500 1" stroke="#21344d" stroke-width="2" fill="none"/></svg>
<span class="t" style="letter-spacing:0.174px;left:51px;top:192px;">dvigok_v_v[1][1]_s.stl</span>
<div class="a hd" style="left:0;top:208px;width:12px;height:19px;"></div>
<div class="a" style="left:48px;top:208px;width:165px;height:19px;border-bottom:1px solid #e4e0d8;border-left:1px solid #e4e0d8;"></div>
<div class="a" style="left:22px;top:208px;width:1px;height:19px;border-left:1px dotted #808080;"></div>
<div class="a" style="left:23px;top:217px;width:8px;height:1px;border-top:1px dotted #808080;"></div>
<div class="a cb" style="left:32px;top:210px;"></div><svg class="a" style="left:35px;top:213px;" width="8" height="8" viewBox="0 0 8 8"><path d="M0.500 3.5L3 6L7.500 1" stroke="#21344d" stroke-width="2" fill="none"/></svg>
<span class="t" style="letter-spacing:0.174px;left:51px;top:211px;">dvigok_v_v[1][2]_s.stl</span>
<div class="a hd" style="left:0;top:227px;width:12px;height:19px;"></div>
<div class="a" style="left:48px;top:227px;width:165px;height:19px;border-bottom:1px solid #e4e0d8;border-left:1px solid #e4e0d8;"></div>
<div class="a" style="left:22px;top:227px;width:1px;height:19px;border-left:1px dotted #808080;"></div>
<div class="a" style="left:23px;top:236px;width:8px;height:1px;border-top:1px dotted #808080;"></div>
<div class="a cb" style="left:32px;top:229px;"></div><svg class="a" style="left:35px;top:232px;" width="8" height="8" viewBox="0 0 8 8"><path d="M0.500 3.5L3 6L7.500 1" stroke="#21344d" stroke-width="2" fill="none"/></svg>
<span class="t" style="letter-spacing:0.153px;left:51px;top:230px;">detal_v_v_v_s.stl</span>
<div class="a hd" style="left:0;top:246px;width:12px;height:19px;"></div>
<div class="a" style="left:48px;top:246px;width:165px;height:19px;border-bottom:1px solid #e4e0d8;border-left:1px solid #e4e0d8;"></div>
<div class="a" style="left:22px;top:246px;width:1px;height:19px;border-left:1px dotted #808080;"></div>
<div class="a" style="left:23px;top:255px;width:8px;height:1px;border-top:1px dotted #808080;"></div>
<div class="a cb" style="left:32px;top:248px;"></div><svg class="a" style="left:35px;top:251px;" width="8" height="8" viewBox="0 0 8 8"><path d="M0.500 3.5L3 6L7.500 1" stroke="#21344d" stroke-width="2" fill="none"/></svg>
<span class="t" style="letter-spacing:-0.031px;left:51px;top:249px;">nakladka_lev_v_v_v_s.stl</span>
<div class="a hd" style="left:0;top:265px;width:12px;height:19px;"></div>
<div class="a" style="left:48px;top:265px;width:165px;height:19px;border-bottom:1px solid #e4e0d8;border-left:1px solid #e4e0d8;"></div>
<div class="a" style="left:22px;top:265px;width:1px;height:19px;border-left:1px dotted #808080;"></div>
<div class="a" style="left:23px;top:274px;width:8px;height:1px;border-top:1px dotted #808080;"></div>
<div class="a cb" style="left:32px;top:267px;"></div><svg class="a" style="left:35px;top:270px;" width="8" height="8" viewBox="0 0 8 8"><path d="M0.500 3.5L3 6L7.500 1" stroke="#21344d" stroke-width="2" fill="none"/></svg>
<span class="t" style="letter-spacing:-0.003px;left:51px;top:268px;">nakladka_prav_v_v_v_s.stl</span>
<div class="a hd" style="left:0;top:284px;width:12px;height:19px;"></div>
<div class="a" style="left:48px;top:284px;width:165px;height:19px;border-bottom:1px solid #e4e0d8;border-left:1px solid #e4e0d8;"></div>
<div class="a" style="left:22px;top:284px;width:1px;height:19px;border-left:1px dotted #808080;"></div>
<div class="a" style="left:23px;top:293px;width:8px;height:1px;border-top:1px dotted #808080;"></div>
<div class="a cb" style="left:32px;top:286px;"></div><svg class="a" style="left:35px;top:289px;" width="8" height="8" viewBox="0 0 8 8"><path d="M0.500 3.5L3 6L7.500 1" stroke="#21344d" stroke-width="2" fill="none"/></svg>
<span class="t" style="letter-spacing:0.022px;left:51px;top:287px;">nakladka_v_v_v_s.stl</span>
<div class="a hd" style="left:0;top:303px;width:12px;height:19px;"></div>
<div class="a" style="left:48px;top:303px;width:165px;height:19px;border-bottom:1px solid #e4e0d8;border-left:1px solid #e4e0d8;"></div>
<div class="a" style="left:22px;top:303px;width:1px;height:19px;border-left:1px dotted #808080;"></div>
<div class="a" style="left:23px;top:312px;width:8px;height:1px;border-top:1px dotted #808080;"></div>
<div class="a cb" style="left:32px;top:305px;"></div><svg class="a" style="left:35px;top:308px;" width="8" height="8" viewBox="0 0 8 8"><path d="M0.500 3.5L3 6L7.500 1" stroke="#21344d" stroke-width="2" fill="none"/></svg>
<span class="t" style="letter-spacing:0.002px;left:51px;top:306px;">sla_25.07.2013 model_korpys...</span>
<div class="a hd" style="left:0;top:322px;width:12px;height:19px;"></div>
<div class="a" style="left:48px;top:322px;width:165px;height:19px;border-bottom:1px solid #e4e0d8;border-left:1px solid #e4e0d8;"></div>
<div class="a" style="left:22px;top:322px;width:1px;height:19px;border-left:1px dotted #808080;"></div>
<div class="a" style="left:23px;top:331px;width:8px;height:1px;border-top:1px dotted #808080;"></div>
<div class="a cb" style="left:32px;top:324px;"></div><svg class="a" style="left:35px;top:327px;" width="8" height="8" viewBox="0 0 8 8"><path d="M0.500 3.5L3 6L7.500 1" stroke="#21344d" stroke-width="2" fill="none"/></svg>
<span class="t" style="letter-spacing:0.179px;left:51px;top:325px;">vstavka.stl_v_v_v_s.stl</span>
<div class="a hd" style="left:0;top:341px;width:12px;height:19px;"></div>
<div class="a" style="left:48px;top:341px;width:165px;height:19px;border-bottom:1px solid #e4e0d8;border-left:1px solid #e4e0d8;"></div>
<div class="a" style="left:22px;top:341px;width:1px;height:19px;border-left:1px dotted #808080;"></div>
<div class="a" style="left:23px;top:350px;width:8px;height:1px;border-top:1px dotted #808080;"></div>
<div class="a cb" style="left:32px;top:343px;"></div><svg class="a" style="left:35px;top:346px;" width="8" height="8" viewBox="0 0 8 8"><path d="M0.500 3.5L3 6L7.500 1" stroke="#21344d" stroke-width="2" fill="none"/></svg>
<span class="t" style="letter-spacing:0.149px;left:51px;top:344px;">detal_r_v_v_v_s.stl</span>
<div class="a hd" style="left:0;top:360px;width:12px;height:19px;"></div>
<div class="a" style="left:48px;top:360px;width:165px;height:19px;border-bottom:1px solid #e4e0d8;border-left:1px solid #e4e0d8;"></div>
<div class="a" style="left:22px;top:360px;width:1px;height:19px;border-left:1px dotted #808080;"></div>
<div class="a" style="left:23px;top:369px;width:8px;height:1px;border-top:1px dotted #808080;"></div>
<div class="a cb" style="left:32px;top:362px;"></div><svg class="a" style="left:35px;top:365px;" width="8" height="8" viewBox="0 0 8 8"><path d="M0.500 3.5L3 6L7.500 1" stroke="#21344d" stroke-width="2" fill="none"/></svg>
<span class="t" style="letter-spacing:0.074px;left:51px;top:363px;">podavatel_tk11_1sht_v_s.stl</span>
<div class="a hd" style="left:0;top:379px;width:12px;height:19px;"></div>
<div class="a" style="left:48px;top:379px;width:165px;height:19px;border-bottom:1px solid #e4e0d8;border-left:1px solid #e4e0d8;"></div>
<div class="a" style="left:22px;top:379px;width:1px;height:19px;border-left:1px dotted #808080;"></div>
<div class="a" style="left:23px;top:388px;width:8px;height:1px;border-top:1px dotted #808080;"></div>
<div class="a cb" style="left:32px;top:381px;"></div><svg class="a" style="left:35px;top:384px;" width="8" height="8" viewBox="0 0 8 8"><path d="M0.500 3.5L3 6L7.500 1" stroke="#21344d" stroke-width="2" fill="none"/></svg>
<span class="t" style="letter-spacing:0.027px;left:51px;top:382px;">kok dl verh_v_s.stl</span>
<div class="a hd" style="left:0;top:398px;width:12px;height:19px;"></div>
<div class="a" style="left:48px;top:398px;width:165px;height:19px;border-bottom:1px solid #e4e0d8;border-left:1px solid #e4e0d8;"></div>
<div class="a" style="left:22px;top:398px;width:1px;height:19px;border-left:1px dotted #808080;"></div>
<div class="a" style="left:23px;top:407px;width:8px;height:1px;border-top:1px dotted #808080;"></div>
<div class="a cb" style="left:32px;top:400px;"></div><svg class="a" style="left:35px;top:403px;" width="8" height="8" viewBox="0 0 8 8"><path d="M0.500 3.5L3 6L7.500 1" stroke="#21344d" stroke-width="2" fill="none"/></svg>
<span class="t" style="letter-spacing:0.070px;left:51px;top:401px;">korpus_tk11_1sht_v_s.stl</span>
<div class="a hd" style="left:0;top:417px;width:12px;height:19px;"></div>
<div class="a" style="left:48px;top:417px;width:165px;height:19px;border-bottom:1px solid #e4e0d8;border-left:1px solid #e4e0d8;"></div>
<div class="a" style="left:22px;top:417px;width:1px;height:19px;border-left:1px dotted #808080;"></div>
<div class="a" style="left:23px;top:426px;width:8px;height:1px;border-top:1px dotted #808080;"></div>
<div class="a cb" style="left:32px;top:419px;"></div><svg class="a" style="left:35px;top:422px;" width="8" height="8" viewBox="0 0 8 8"><path d="M0.500 3.5L3 6L7.500 1" stroke="#21344d" stroke-width="2" fill="none"/></svg>
<span class="t" style="letter-spacing:0.036px;left:51px;top:420px;">korpus_tk10_1sht_v_s.stl</span>
<svg class="a" style="left:3px;top:22px;" width="6" height="9" viewBox="0 0 6 9"><path d="M0 0L6 4.5L0 9Z" fill="#000"/></svg>
<div class="a" style="left:213px;top:0;width:16px;height:433px;background:#e9e7e2;"></div>
<div class="btn" style="left:213px;top:0;width:16px;height:17px;"></div><svg class="a" style="left:217px;top:6px;" width="7" height="4" viewBox="0 0 7 4"><path d="M0 4H7L3.5 0Z" fill="#000"/></svg>
<div class="btn" style="left:213px;top:17px;width:16px;height:168px;"></div>
<div class="btn" style="left:213px;top:416px;width:16px;height:17px;"></div><svg class="a" style="left:217px;top:422px;" width="7" height="4" viewBox="0 0 7 4"><path d="M0 0H7L3.5 4Z" fill="#000"/></svg>
</div>
<div class="btn" style="left:1055px;top:942px;width:128px;height:21px;"></div>
<span class="t" style="letter-spacing:-0.911px;left:1072px;top:947px;">CHOOSE COLUMNS</span>
<div class="tabbar" style="left:1103px;top:972px;width:174px;height:20px;"></div>
<div class="a" style="left:1049px;top:973px;width:55px;height:19px;border:1px solid #000;border-top:none;border-left:2px solid #fff;background:#d4d0c8;"></div><div class="a" style="left:1049px;top:972px;width:3px;height:1px;background:#000;"></div>
<span class="t" style="letter-spacing:-0.186px;left:1054px;top:976px;">Parts List</span>
<span class="t" style="letter-spacing:-0.193px;left:1107px;top:976px;color:#404040;">Active Dialogs</span><div class="a" style="left:1181px;top:976px;width:1px;height:11px;background:#404040;"></div>
<!-- taskbar -->
<div class="a" style="left:0;top:996px;width:1280px;height:1px;background:#fff;"></div>
<div class="btn" style="left:2px;top:1000px;width:52px;height:22px;"></div>
<svg class="a" style="left:4px;top:1002px;" width="16" height="16" viewBox="0 0 16 16">
<path d="M1.5 2.500 Q4 1 7 2.500 L6 8 Q3.500 6.500 0.500 8 Z" fill="#e8642c"/><path d="M8 2.800 Q11 4.300 14.500 2.500 L13.500 8 Q10.500 9.500 7 8 Z" fill="#6cb43c"/>
<path d="M0.300 9 Q3.300 7.500 5.800 9 L4.800 14.500 Q2.300 13 -0.500 14.500 Z" fill="#3c78d8"/><path d="M6.800 9.300 Q9.800 10.800 13.300 9 L12.300 14.500 Q9.300 16 5.800 14.500 Z" fill="#f0c030"/>
</svg>
<span class="t b" style="letter-spacing:0.588px;left:22px;top:1004px;">Start</span>
<svg class="a" style="left:61px;top:1002px;" width="17" height="17" viewBox="0 0 17 17"><rect x="1" y="1.500" width="14" height="14" rx="4" fill="#e8f2ff" stroke="#3c8ce0" stroke-width="2"/><path d="M11 5.500 A4 4 0 1 0 11 11.500 M5.500 8.500 H11" stroke="#2060c0" stroke-width="1.600" fill="none"/><path d="M13 6 L16 8.500 L13 10 Z" fill="#e07030"/></svg>
<svg class="a" style="left:86px;top:1002px;" width="14" height="17" viewBox="0 0 14 17"><path d="M2 6 L4 16 H10 L12 6 Z" fill="#b8a890" stroke="#806850" stroke-width="0.800"/><path d="M3 1 L5 9" stroke="#c04828" stroke-width="2"/><path d="M7 2 L7 9" stroke="#e8b030" stroke-width="2"/><path d="M11.500 1 L9 9" stroke="#5078c0" stroke-width="2"/><path d="M5 8 L6 15" stroke="#50a050" stroke-width="1.500"/></svg>
<div class="a" style="left:118px;top:1000px;width:159px;height:22px;border:1px solid;border-color:#404040 #fff #fff #404040;box-shadow:inset 1px 1px 0 #808080;background-color:#ebe9e5;background-image:linear-gradient(45deg,#fff 25%,transparent 25%,transparent 75%,#fff 75%),linear-gradient(45deg,#fff 25%,transparent 25%,transparent 75%,#fff 75%);background-size:2px 2px;background-position:0 0,1px 1px;"></div>
<svg class="a" style="left:123px;top:1003px;" width="16" height="17" viewBox="0 0 16 17">
  <rect x="0.500" y="2.500" width="15" height="14" fill="#8ca4cc" stroke="#4a6088"/>
  <rect x="2" y="4" width="5" height="7" fill="#10204a" stroke="#c8d8f0" stroke-width="0.800"/><rect x="9" y="4" width="5" height="7" fill="#10204a" stroke="#c8d8f0" stroke-width="0.800"/>
  <rect x="3.500" y="5.500" width="2" height="3" fill="#dfe8f8"/><rect x="10.500" y="5.500" width="2" height="3" fill="#dfe8f8"/>
  <rect x="10" y="0" width="2" height="3" fill="#5a6a8a"/>
</svg>
<span class="t b" style="letter-spacing:0.416px;left:143px;top:1005px;">3DPrint 1.10&nbsp;&nbsp; iPro 90...</span>
<span class="t" style="letter-spacing:-0.185px;left:1048px;top:1005px;">My Computer</span>
<svg class="a" style="left:1119px;top:1004px;" width="18" height="13" viewBox="0 0 18 13"><path d="M1 6 L6 2 H16 L12 6 Z" fill="#e8e8e8" stroke="#808080" stroke-width="0.800"/><path d="M1 6 H12 V10 H1 Z" fill="#b8b8b8" stroke="#707070" stroke-width="0.800"/><path d="M12 6 L16 2 V6 L12 10 Z" fill="#909090" stroke="#707070" stroke-width="0.800"/></svg>
<span class="t b" style="left:1151px;top:1001px;font-size:10px;">»</span>
<div class="a" style="left:1162px;top:1000px;width:115px;height:22px;border:1px solid;border-color:#808080 #fff #fff #808080;"></div>
<svg class="a" style="left:1165px;top:1002px;" width="54" height="18" viewBox="0 0 54 18">
<rect x="1" y="1" width="15" height="15" fill="#3a78b8"/><path d="M1 16 L8 1 L16 16 Z" fill="#f0a020"/><path d="M8 5 L13 15 H3 Z" fill="#f8d040" stroke="#403010" stroke-width="0.800"/><rect x="7.500" y="8" width="1.200" height="4" fill="#000"/><rect x="7.500" y="13" width="1.200" height="1.200" fill="#000"/>
<rect x="24" y="2" width="9" height="7" fill="#4868b0" stroke="#283868"/><rect x="19" y="7" width="9" height="7" fill="#5878c0" stroke="#283868"/><rect x="21" y="15" width="5" height="1.500" fill="#606060"/><rect x="26" y="10" width="5" height="1.500" fill="#606060"/>
<path d="M45 1.500 L51 3.500 V9 Q51 14 45 16.500 Q39 14 39 9 V3.500 Z" fill="#f0d040" stroke="#a08010"/><rect x="44.300" y="5" width="1.600" height="5.500" fill="#202020"/><rect x="44.300" y="12" width="1.600" height="1.600" fill="#202020"/>
</svg>
<span class="t" style="letter-spacing:-0.281px;left:1227px;top:1005px;">1:34 PM</span>

</body></html>
